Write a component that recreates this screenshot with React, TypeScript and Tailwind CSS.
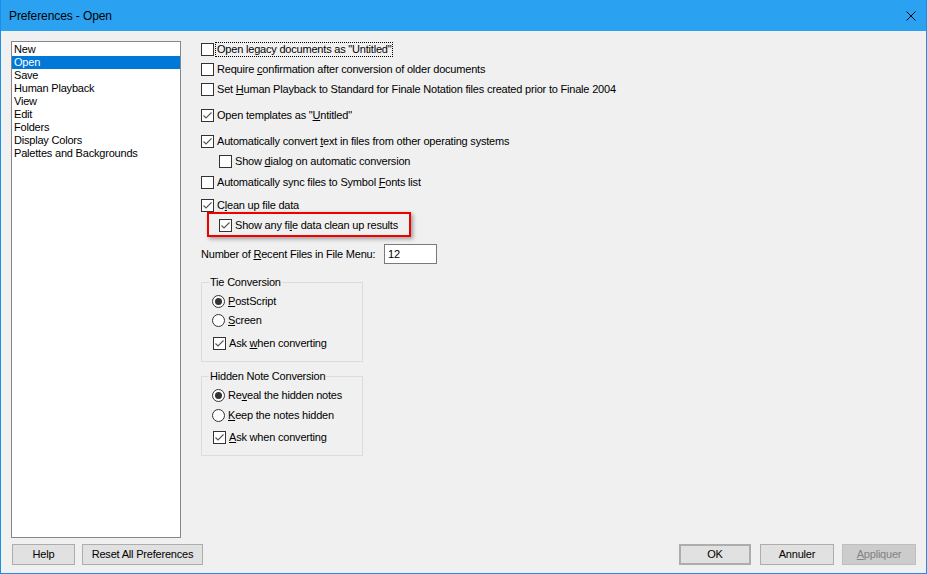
import React from "react";

function Box({ checked }: { checked?: boolean }) {
  return (
    <span className="flex h-[13px] w-[13px] shrink-0 items-center justify-center border border-[#333333] bg-white">
      {checked && (
        <svg width="11" height="11" viewBox="0 0 11 11">
          <path d="M1.5 5.5 L4 8 L9.5 2.5" stroke="#555555" strokeWidth="1.1" fill="none" />
        </svg>
      )}
    </span>
  );
}

function Radio({ on }: { on?: boolean }) {
  return (
    <span className="flex h-[13px] w-[13px] shrink-0 items-center justify-center rounded-full border border-[#333333] bg-white">
      {on && <span className="h-[7px] w-[7px] rounded-full bg-[#333333]" />}
    </span>
  );
}

function U({ children }: { children: React.ReactNode }) {
  return <span className="underline underline-offset-[1px]">{children}</span>;
}

function Check({
  checked,
  children,
  className = "",
}: {
  checked?: boolean;
  children: React.ReactNode;
  className?: string;
}) {
  return (
    <div className={"flex h-[13px] items-center " + className}>
      <Box checked={checked} />
      <span className="ml-[3px] whitespace-nowrap leading-[13px]">{children}</span>
    </div>
  );
}

function RadioRow({
  on,
  children,
  className = "",
}: {
  on?: boolean;
  children: React.ReactNode;
  className?: string;
}) {
  return (
    <div className={"flex h-[13px] items-center " + className}>
      <Radio on={on} />
      <span className="ml-[3px] whitespace-nowrap leading-[13px]">{children}</span>
    </div>
  );
}

function Btn({
  children,
  className = "",
}: {
  children: React.ReactNode;
  className?: string;
}) {
  return (
    <div
      className={
        "flex h-[21px] items-center justify-center border border-[#adadad] bg-[#e1e1e1] text-black " +
        className
      }
    >
      {children}
    </div>
  );
}

export default function App() {
  const items = [
    "New",
    "Open",
    "Save",
    "Human Playback",
    "View",
    "Edit",
    "Folders",
    "Display Colors",
    "Palettes and Backgrounds",
  ];
  return (
    <div className="flex h-[574px] w-[927px] flex-col overflow-hidden border-x border-b border-[#1b8fe6] bg-[#f0f0f0] font-['Liberation_Sans',Arial,sans-serif] text-[11px] leading-[13px] tracking-[-0.2px] text-black">
      {/* Title bar */}
      <div className="flex h-[31px] shrink-0 items-center justify-between bg-[#2aa2f1] pl-[8px] pr-[9px]">
        <span className="text-[12px] leading-[16px] tracking-[-0.1px] text-black">Preferences - Open</span>
        <svg width="12" height="12" viewBox="0 0 12 12">
          <path d="M1.5 1.5 L10.5 10.5 M10.5 1.5 L1.5 10.5" stroke="#000" strokeWidth="1" />
        </svg>
      </div>

      {/* Body */}
      <div className="flex flex-1 flex-col pt-[10px]">
        <div className="flex h-[497px] items-start">
          {/* List box */}
          <div className="ml-[10px] flex h-[497px] w-[170px] shrink-0 flex-col border border-[#828790] bg-white pt-[1px]">
            {items.map((it) => (
              <div
                key={it}
                className={
                  "h-[13px] pl-[2px] leading-[13px] whitespace-nowrap " +
                  (it === "Open" ? "bg-[#0078d7] text-white" : "")
                }
              >
                {it}
              </div>
            ))}
          </div>

          {/* Right column */}
          <div className="ml-[20px] flex flex-col pt-[2px]">
            <div className="flex h-[13px] items-center">
              <Box />
              <span className="ml-[1px] whitespace-nowrap border border-dotted border-black px-[1px] leading-[13px]">
                Open legacy documents as "Untitled"
              </span>
            </div>
            <Check className="mt-[7px]">
              Require <U>c</U>onfirmation after conversion of older documents
            </Check>
            <Check className="mt-[7px]">
              Set <U>H</U>uman Playback to Standard for Finale Notation files created prior to Finale 2004
            </Check>
            <Check checked className="mt-[13px]">
              Open templates as "<U>U</U>ntitled"
            </Check>
            <Check checked className="mt-[13px]">
              Automatically convert <U>t</U>ext in files from other operating systems
            </Check>
            <Check className="ml-[18px] mt-[7px]">
              Show <U>d</U>ialog on automatic conversion
            </Check>
            <Check className="mt-[8px]">
              Automatically sync files to Symbol <U>F</U>onts list
            </Check>
            <Check checked className="mt-[10px]">
              C<U>l</U>ean up file data
            </Check>
            <div className="ml-[6px] mt-0 w-[204px] border-2 border-[#ee0000] pb-[3px] pl-[10px] pt-[5px] shadow-[2px_2px_4px_rgba(0,0,0,0.35)]">
              <Check checked>
                Show any fi<U>l</U>e data clean up results
              </Check>
            </div>

            <div className="mt-[7px] flex h-[20px] items-center">
              <span className="w-[183px] whitespace-nowrap">
                Number of <U>R</U>ecent Files in File Menu:
              </span>
              <div className="flex h-[20px] w-[53px] items-center border border-[#7a7a7a] bg-white pl-[3px]">
                12
              </div>
            </div>

            {/* Tie Conversion */}
            <div className="relative mt-[18px] h-[80px] w-[162px] border border-[#dcdcdc] pl-[10px] pt-[12px]">
              <span className="absolute left-[7px] top-[-7px] bg-[#f0f0f0] px-[1px] leading-[13px]">
                Tie Conversion
              </span>
              <RadioRow on>
                <U>P</U>ostScript
              </RadioRow>
              <RadioRow className="mt-[6px]">
                <U>S</U>creen
              </RadioRow>
              <Check checked className="ml-[1px] mt-[10px]">
                Ask <U>w</U>hen converting
              </Check>
            </div>

            {/* Hidden Note Conversion */}
            <div className="relative mt-[14px] h-[80px] w-[162px] border border-[#dcdcdc] pl-[10px] pt-[12px]">
              <span className="absolute left-[7px] top-[-7px] bg-[#f0f0f0] px-[1px] leading-[13px]">
                Hidden Note Conversion
              </span>
              <RadioRow on>
                Re<U>v</U>eal the hidden notes
              </RadioRow>
              <RadioRow className="mt-[7px]">
                <U>K</U>eep the notes hidden
              </RadioRow>
              <Check checked className="ml-[1px] mt-[9px]">
                <U>A</U>sk when converting
              </Check>
            </div>
          </div>
        </div>

        {/* Buttons */}
        <div className="mt-[6px] flex h-[21px] items-center pl-[11px] pr-[10px]">
          <Btn className="w-[63px]">Help</Btn>
          <Btn className="ml-[7px] w-[121px]">Reset All Preferences</Btn>
          <div className="flex-1" />
          <Btn className="w-[72px] border-2 border-[#0078d7]">OK</Btn>
          <Btn className="ml-[9px] w-[74px]">Annuler</Btn>
          <div className="ml-[8px] flex h-[21px] w-[74px] items-center justify-center border border-[#bfbfbf] bg-[#cccccc] text-[#838383]">
            <U>A</U>ppliquer
          </div>
        </div>
      </div>
    </div>
  );
}
